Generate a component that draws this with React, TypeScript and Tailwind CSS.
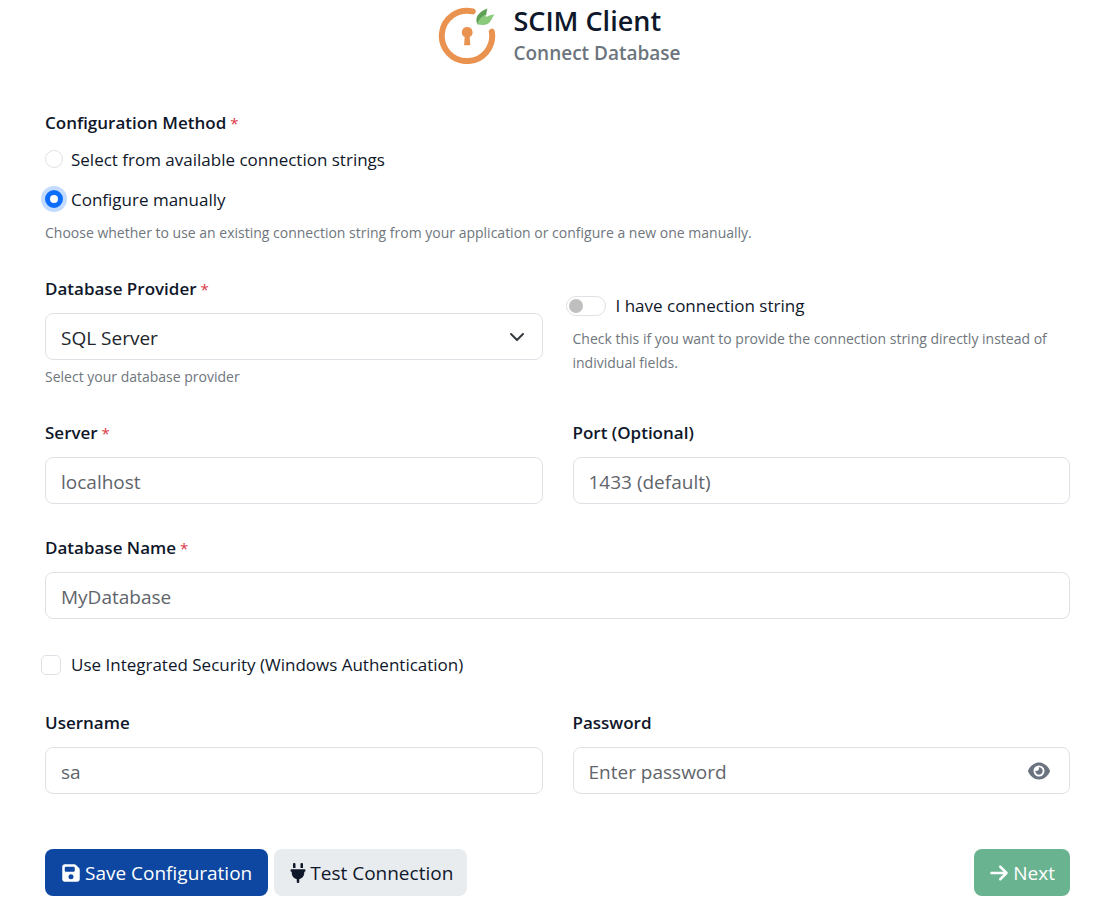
import { useState, type ReactNode } from "react";
import { FaArrowRight, FaEye, FaFloppyDisk, FaPlug } from "react-icons/fa6";

const inputStyle =
  "h-[47px] w-full rounded-lg border border-[#dee2e6] bg-white px-[15px] pt-0.5 text-[19px] leading-6 text-[#212529] outline-none placeholder:text-[#5f656b]";
const hintStyle = "text-[14px] leading-6 text-[#6f767d]";

function Logo() {
  return (
    <svg viewBox="0 0 60 60" className="size-[60px] shrink-0" aria-hidden="true">
      <path d="M35.800 7.400A25.200 25.200 0 1 0 54.800 27.600" fill="none" stroke="#ea9350" strokeWidth="6" strokeLinecap="round" />
      <path d="M30.200 23a5.300 5.300 0 0 1 2.500 10l.6 8.300h-6.200l.6-8.300a5.300 5.300 0 0 1 2.500-10Z" fill="#ea9350" />
      <path d="M40.300 20.200c-2.300-6.300-.2-11.500 10.200-15.700-.9 2.300-.9 4.500-1.200 6.300-3.600 1.500-7.200 4.700-9 9.400Z" fill="#5f9f56" />
      <path d="M40.300 20.500c1.700-5.500 4.500-8 8-10.100l1 2.600c2.400-1.500 5.200-2.200 8.400-2.800-2.700 2.300-3.200 8.900-8.500 10.400-3 .8-6 0-8.900-.1Z" fill="#8cca7b" />
    </svg>
  );
}

function Required() {
  return <span className="text-[15px] font-normal text-[#dc3545]"> *</span>;
}

function Label({ id, required, children }: { id: string; required?: boolean; children: ReactNode }) {
  return (
    <label htmlFor={id} className="mb-3 block text-[17px] leading-6 font-semibold">
      {children}
      {required && <Required />}
    </label>
  );
}

function Field({ id, label, required, placeholder }: { id: string; label: string; required?: boolean; placeholder: string }) {
  return (
    <div>
      <Label id={id} required={required}>{label}</Label>
      <input id={id} type="text" placeholder={placeholder} className={inputStyle} />
    </div>
  );
}

function Radio({ id, label, checked, onSelect }: { id: string; label: string; checked: boolean; onSelect: () => void }) {
  return (
    <div className="flex h-6 items-center gap-2">
      <input
        id={id}
        type="radio"
        name="method"
        checked={checked}
        onChange={onSelect}
        className="size-[18px] shrink-0 appearance-none rounded-full border border-[#dee2e6] bg-white checked:border-[5px] checked:border-[#0d6efd] checked:ring-4 checked:ring-[#c2dbfe]"
      />
      <label htmlFor={id} className="pt-0.5 text-[17px] leading-6">{label}</label>
    </div>
  );
}

export default function App() {
  const [method, setMethod] = useState("manual");
  const [visible, setVisible] = useState(false);

  return (
    <div className="bg-white font-['Open_Sans','Noto_Sans',sans-serif] text-[#0f172a]">
      <header className="flex items-start justify-center gap-4 pt-1 pl-1">
        <Logo />
        <div>
          <h1 className="pt-px text-[27px] leading-8 font-semibold">SCIM Client</h1>
          <p className="text-[19px] leading-8 font-semibold text-[#6c757d]">Connect Database</p>
        </div>
      </header>

      <form className="flex flex-col gap-8 pt-[41px] pr-11 pb-3 pl-[45px]" onSubmit={(e) => e.preventDefault()}>
        <fieldset>
          <legend className="mb-3 pt-px text-[17px] leading-6 font-semibold">
            Configuration Method<Required />
          </legend>
          <div className="flex flex-col gap-4">
            <Radio id="existing" label="Select from available connection strings" checked={method === "existing"} onSelect={() => setMethod("existing")} />
            <Radio id="manual" label="Configure manually" checked={method === "manual"} onSelect={() => setMethod("manual")} />
          </div>
          <p className={`mt-2.5 ${hintStyle}`}>
            Choose whether to use an existing connection string from your application or configure a new one manually.
          </p>
        </fieldset>

        <div className="grid grid-cols-2 gap-[30px]">
          <div>
            <Label id="provider" required>Database Provider</Label>
            <div className="grid items-center">
              <select id="provider" className={`col-start-1 row-start-1 appearance-none ${inputStyle}`}>
                <option>SQL Server</option>
              </select>
              <svg viewBox="0 0 16 16" className="pointer-events-none col-start-1 row-start-1 mr-[18px] size-4 justify-self-end" fill="none" stroke="#343a40" strokeWidth="2" strokeLinecap="round" strokeLinejoin="round" aria-hidden="true">
                <path d="m2 5 6 6 6-6" />
              </svg>
            </div>
            <p className={`mt-[5px] ${hintStyle}`}>Select your database provider</p>
          </div>
          <div className="pt-[17px]">
            <div className="-ml-[7px] flex h-6 items-center gap-2.5">
              <input
                id="has-string"
                type="checkbox"
                role="switch"
                className="flex h-5 w-10 shrink-0 appearance-none items-center rounded-full border border-[#dee2e6] px-0.5 before:size-3.5 before:rounded-full before:bg-[#bfbfbf] checked:justify-end checked:bg-[#0d6efd] checked:before:bg-white"
              />
              <label htmlFor="has-string" className="text-[17px] leading-6">I have connection string</label>
            </div>
            <p className={`mt-[9px] ${hintStyle}`}>
              Check this if you want to provide the connection string directly instead of individual fields.
            </p>
          </div>
        </div>

        <div className="grid grid-cols-2 gap-[30px]">
          <Field id="server" label="Server" required placeholder="localhost" />
          <Field id="port" label="Port (Optional)" placeholder="1433 (default)" />
        </div>

        <Field id="database" label="Database Name" required placeholder="MyDatabase" />

        <div className="-ml-1 flex h-7 items-center gap-2.5">
          <input
            id="integrated"
            type="checkbox"
            className="size-5 shrink-0 appearance-none rounded-[5px] border border-[#dee2e6] bg-white checked:border-[#0d6efd] checked:bg-[#0d6efd]"
          />
          <label htmlFor="integrated" className="text-[17px] leading-6">Use Integrated Security (Windows Authentication)</label>
        </div>

        <div className="grid grid-cols-2 gap-[30px]">
          <Field id="username" label="Username" placeholder="sa" />
          <div>
            <Label id="password">Password</Label>
            <div className="grid items-center">
              <input id="password" type={visible ? "text" : "password"} placeholder="Enter password" className={`col-start-1 row-start-1 ${inputStyle}`} />
              <button type="button" aria-label="Show password" onClick={() => setVisible(!visible)} className="col-start-1 row-start-1 mr-5 justify-self-end text-[#6b7280]">
                <FaEye className="size-[22px]" />
              </button>
            </div>
          </div>
        </div>

        <div className="mt-[23px] flex items-center gap-1.5 text-[19px] leading-6">
          <button type="submit" className="flex h-[47px] items-center gap-1 rounded-lg bg-[#0d47a1] px-4 text-white">
            <FaFloppyDisk className="size-5" />
            Save Configuration
          </button>
          <button type="button" className="flex h-[47px] items-center gap-0.5 rounded-lg bg-[#e9ecef] px-3.5 text-[#0f172a]">
            <FaPlug className="size-5" />
            Test Connection
          </button>
          <button type="button" className="ml-auto flex h-[47px] items-center gap-1 rounded-lg bg-[#6ab391] px-[15px] text-white">
            <FaArrowRight className="size-5" />
            Next
          </button>
        </div>
      </form>
    </div>
  );
}
